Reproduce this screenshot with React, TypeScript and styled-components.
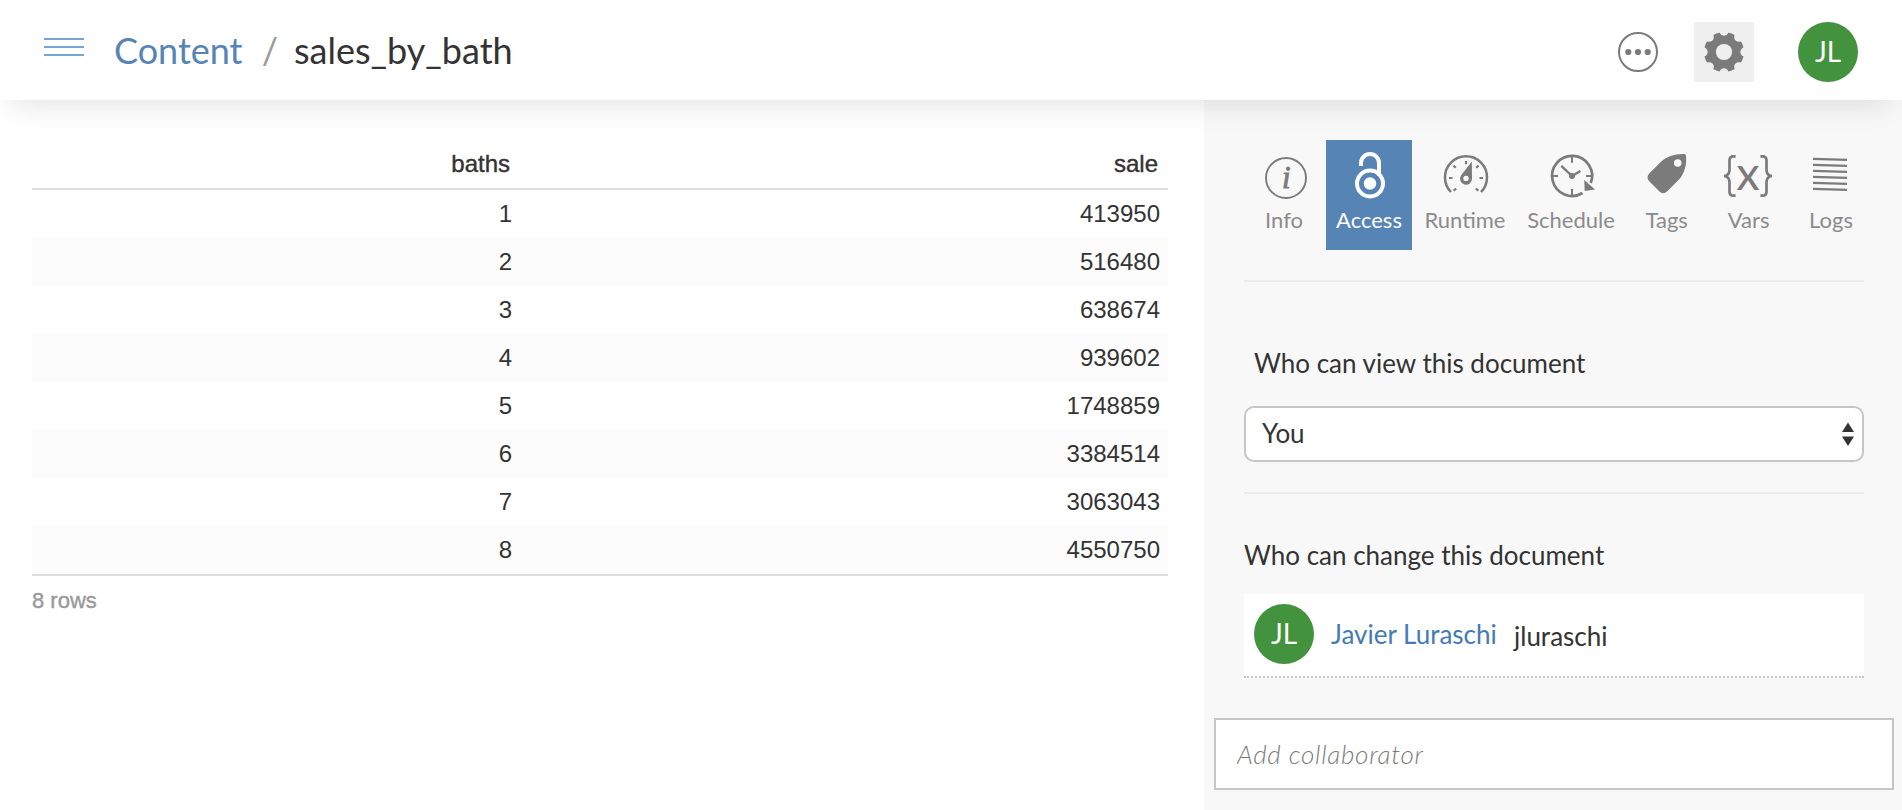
import React from "react";
import styled, { createGlobalStyle } from "styled-components";

const GlobalStyle = createGlobalStyle`
  * { box-sizing: border-box; }
  body { margin: 0; background: #fff; color: #333; font-family: Lato, sans-serif; overflow: hidden; }
`;

const Page = styled.div`
  height: 810px;
  display: flex;
  flex-direction: column;
`;

const Header = styled.header`
  position: relative;
  z-index: 1;
  flex: none;
  height: 100px;
  padding: 0 44px;
  display: flex;
  align-items: center;
  background: #fff;
  box-shadow: 0 16px 30px -12px rgba(0, 0, 0, 0.12);
`;

const MenuButton = styled.div`
  width: 40px;
  height: 18px;
  margin: 0 30px 6px 0;
  display: flex;
  flex-direction: column;
  justify-content: space-between;
`;

const MenuBar = styled.span`
  height: 2px;
  background: #78a6d8;
`;

const Breadcrumb = styled.nav`
  flex: 1;
  display: flex;
  align-items: center;
  font-size: 36px;
  line-height: 44px;
  white-space: pre;
`;

const CrumbLink = styled.span`
  width: 132px;
  color: #5684b5;
`;

const Slash = styled.span`
  width: 48px;
  text-align: center;
  color: #999;
`;

const HeaderActions = styled.div`
  display: flex;
  align-items: center;
  padding-top: 4px;
`;

const IconBox = styled.div<{ $active?: boolean }>`
  width: 60px;
  height: 60px;
  display: flex;
  align-items: center;
  justify-content: center;
  background: ${(p) => (p.$active ? "#efefef" : "transparent")};
  margin-right: ${(p) => (p.$active ? 44 : 26)}px;
`;

const Avatar = styled.div`
  flex: none;
  width: 60px;
  height: 60px;
  padding-bottom: 2px;
  border-radius: 50%;
  display: flex;
  align-items: center;
  justify-content: center;
  background: #42923e;
  color: #fff;
  font-size: 28px;
  line-height: 34px;
`;

const Body = styled.div`
  flex: 1;
  display: flex;
`;

const Content = styled.main`
  width: 1204px;
  padding: 40px 36px 0 32px;
  font-family: "Liberation Sans", Arial, sans-serif;
`;

const Table = styled.table`
  width: 1136px;
  table-layout: fixed;
  border-collapse: separate;
  border-spacing: 0;
  border-bottom: 2px solid #dcdcdc;
`;

const HeadCell = styled.th`
  height: 50px;
  padding: 0 10px 1px 0;
  border-bottom: 2px solid #dcdcdc;
  text-align: right;
  font-size: 24px;
  font-weight: 400;
  -webkit-text-stroke: 0.4px #333;
`;

const Row = styled.tr`
  &:nth-child(even) { background: #fcfcfc; }
`;

const Cell = styled.td`
  height: 48px;
  padding: 0 8px 0 0;
  text-align: right;
  font-size: 24px;
  line-height: 28px;
`;

const RowCount = styled.div`
  margin-top: 13px;
  font-size: 22px;
  line-height: 24px;
  color: #999;
  -webkit-text-stroke: 0.4px #999;
`;

const Sidebar = styled.aside`
  width: 698px;
  background: #f8f8f8;
  padding-top: 40px;
`;

const Tabs = styled.div`
  display: flex;
  margin-left: 40px;
  height: 110px;
`;

const Tab = styled.div<{ $width: number; $active?: boolean }>`
  width: ${(p) => p.$width}px;
  padding-top: 6px;
  display: flex;
  flex-direction: column;
  align-items: center;
  color: ${(p) => (p.$active ? "#fff" : "#7b7b7b")};
  background: ${(p) => (p.$active ? "#5684b5" : "transparent")};
  svg { flex: none; overflow: visible; }
`;

const TabLabel = styled.span<{ $active?: boolean; $shift?: number }>`
  margin-top: 5px;
  margin-left: ${(p) => (p.$shift || 0) * 2}px;
  font-size: 22px;
  line-height: 26px;
  color: ${(p) => (p.$active ? "#fff" : "#8b8b8b")};
`;

const Section = styled.section<{ $top: number }>`
  margin: ${(p) => p.$top}px 38px 0 40px;
  border-top: 2px solid #ebebeb;
`;

const SectionTitle = styled.h2<{ $top: number; $indent?: number }>`
  margin: ${(p) => p.$top}px 0 0 ${(p) => p.$indent || 0}px;
  font-size: 26px;
  font-weight: 400;
  line-height: 32px;
`;

const Select = styled.div`
  height: 56px;
  margin-top: 27px;
  padding: 0 8px 0 16px;
  display: flex;
  align-items: center;
  justify-content: space-between;
  background: #fff;
  border: 2px solid #c6c6c6;
  border-radius: 10px;
  font-size: 26px;
`;

const SelectValue = styled.span`
  padding-bottom: 2px;
`;

const Person = styled.div`
  height: 84px;
  margin-top: 23px;
  padding: 10px 10px 0;
  display: flex;
  background: #fff;
  border-bottom: 2px dotted #c6c6c6;
  font-size: 26px;
  line-height: 32px;
`;

const PersonName = styled.span`
  width: 182px;
  margin: 14px 0 0 17px;
  color: #447ab6;
`;

const PersonLogin = styled.span`
  margin: 16px 0 0 1px;
`;

const CollaboratorInput = styled.input`
  display: block;
  width: 680px;
  height: 72px;
  margin: 40px 0 0 10px;
  padding: 0 21px 0;
  border: 2px solid #c6c6c6;
  border-radius: 0;
  background: #fff;
  font: italic 300 26px Lato, sans-serif;
  letter-spacing: 0.7px;
  &::placeholder { color: #7c7c7c; opacity: 1; }
`;

const MoreIcon = () => (
  <svg width="40" height="40" viewBox="0 0 40 40" fill="#7b7b7b">
    <circle cx="20" cy="20" r="19" fill="none" stroke="#7b7b7b" strokeWidth="2" />
    {[10.3, 20, 29.7].map((x) => <circle key={x} cx={x} cy="20" r="3.1" />)}
  </svg>
);

const GearIcon = () => (
  <svg width="44" height="44" viewBox="-22 -22 44 44">
    <circle r="20" fill="#7b7b7b" />
    {[0, 45, 90, 135, 180, 225, 270, 315].map((a) => (
      <circle key={a} cx="21" r="4.7" fill="#efefef" transform={`rotate(${a})`} />
    ))}
    <circle r="8.1" fill="#efefef" />
  </svg>
);

const TabIcon = ({ children }: { children: React.ReactNode }) => (
  <svg width="48" height="56" viewBox="0 0 48 56" fill="none" stroke="currentColor">{children}</svg>
);

const InfoIcon = () => (
  <TabIcon>
    <circle cx="25" cy="32" r="20" strokeWidth="1.9" />
    <text x="25.4" y="42" textAnchor="middle" fontFamily="Liberation Serif, serif" fontStyle="italic" fontSize="31" fill="currentColor" strokeWidth="0.9">i</text>
  </TabIcon>
);

const AccessIcon = () => (
  <TabIcon>
    <circle cx="25" cy="37.5" r="13" strokeWidth="4" />
    <circle cx="25" cy="37.5" r="6.2" fill="currentColor" stroke="none" />
    <path d="M16 20V17a9 9 0 0 1 18 0V30" strokeWidth="4" />
  </TabIcon>
);

const RuntimeIcon = () => (
  <TabIcon>
    <path d="M10 46A21 21 0 1 1 40 46" strokeWidth="2.5" />
    <path d="M8 32h3.5M38.5 32h3.5M25 15v3.2M12.4 19.6l2.4 2.2M37.6 19.6l-2.4 2.2M12.6 44.6l2.6-2M37.4 44.6l-2.6-2" strokeWidth="2.2" />
    <path fillRule="evenodd" fill="currentColor" stroke="none" d="M30.8 15.5L31 32.5A6 6 0 1 1 20 29.4ZM25 29.7a2.7 2.7 0 1 0 0 5.4a2.7 2.7 0 1 0 0-5.4Z" />
  </TabIcon>
);

const ScheduleIcon = () => (
  <TabIcon>
    <path d="M35.5 47A20 20 0 1 1 43.8 37" strokeWidth="2.7" />
    <path d="M25 11v5.8M25 43v6M5 30h6M39 30h6" strokeWidth="2" />
    <path d="M14.3 19.8L25 30L33.4 25" strokeWidth="2.3" />
    <circle cx="25" cy="30" r="3" fill="currentColor" stroke="none" />
    <path d="M37.3 34L48 43.4L37.7 45Z" fill="currentColor" stroke="none" />
  </TabIcon>
);

const TagIcon = () => (
  <TabIcon>
    <path fillRule="evenodd" fill="currentColor" stroke="none" d="M42.3 8C34 7.4 25 10 18.5 16.2L7 27.8Q4 31.5 7 35L17.5 45.5Q21 49 25 45.5L37 33.5C42.5 28 45 18 44 9.8Q43.8 8.2 42.3 8ZM35.7 13.2a3.8 3.8 0 1 0 0 7.6a3.8 3.8 0 1 0 0-7.6Z" />
  </TabIcon>
);

const VarsIcon = () => (
  <TabIcon>
    <path d="M11.6 10.3H9.5Q5.5 10.3 5.5 14.5V23.5Q5.5 29.7 0 30Q5.5 30.3 5.5 36.5V45.5Q5.5 49.7 9.5 49.7H11.6M36.4 10.3H38.5Q42.5 10.3 42.5 14.5V23.5Q42.5 29.7 48 30Q42.5 30.3 42.5 36.5V45.5Q42.5 49.7 38.5 49.7H36.4" strokeWidth="2.7" />
    <text x="24" y="44" textAnchor="middle" fontFamily="Lato, sans-serif" fontSize="47" fill="currentColor" stroke="none">x</text>
  </TabIcon>
);

const LogsIcon = () => (
  <TabIcon>
    {[12.8, 18.8, 24.8, 30.8, 36.8, 42.8].map((y) => (
      <path key={y} d={`M7 ${y}L41 ${y + 1}`} strokeWidth="2.3" />
    ))}
  </TabIcon>
);

const SelectArrows = () => (
  <svg width="12" height="24" viewBox="0 0 12 24" fill="#333">
    <path d="M6 0.5L12 10H0ZM0 14.5H12L6 24Z" />
  </svg>
);

const tabs = [
  { label: "Info", width: 82, Icon: InfoIcon, shift: -1 },
  { label: "Access", width: 86, Icon: AccessIcon, active: true },
  { label: "Runtime", width: 106, Icon: RuntimeIcon },
  { label: "Schedule", width: 106, Icon: ScheduleIcon },
  { label: "Tags", width: 84, Icon: TagIcon, shift: 0.7 },
  { label: "Vars", width: 80, Icon: VarsIcon, shift: 0.7 },
  { label: "Logs", width: 84, Icon: LogsIcon, shift: 1 },
];

const rows = [
  [1, 413950], [2, 516480], [3, 638674], [4, 939602],
  [5, 1748859], [6, 3384514], [7, 3063043], [8, 4550750],
];

export default function App() {
  return (
    <Page>
      <GlobalStyle />
      <Header>
        <MenuButton><MenuBar /><MenuBar /><MenuBar /></MenuButton>
        <Breadcrumb>
          <CrumbLink>Content</CrumbLink>
          <Slash>/</Slash>
          <span>sales_by_bath</span>
        </Breadcrumb>
        <HeaderActions>
          <IconBox><MoreIcon /></IconBox>
          <IconBox $active><GearIcon /></IconBox>
          <Avatar>JL</Avatar>
        </HeaderActions>
      </Header>
      <Body>
        <Content>
          <Table>
            <colgroup><col width="488" /><col /></colgroup>
            <thead><tr><HeadCell>baths</HeadCell><HeadCell>sale</HeadCell></tr></thead>
            <tbody>
              {rows.map(([baths, sale]) => (
                <Row key={baths}><Cell>{baths}</Cell><Cell>{sale}</Cell></Row>
              ))}
            </tbody>
          </Table>
          <RowCount>8 rows</RowCount>
        </Content>
        <Sidebar>
          <Tabs>
            {tabs.map(({ label, width, Icon, active, shift }) => (
              <Tab key={label} $width={width} $active={active}>
                <Icon />
                <TabLabel $active={active} $shift={shift}>{label}</TabLabel>
              </Tab>
            ))}
          </Tabs>
          <Section $top={30}>
            <SectionTitle $top={65} $indent={10}>Who can view this document</SectionTitle>
            <Select><SelectValue>You</SelectValue><SelectArrows /></Select>
          </Section>
          <Section $top={30}>
            <SectionTitle $top={45}>Who can change this document</SectionTitle>
            <Person>
              <Avatar>JL</Avatar>
              <PersonName>Javier Luraschi</PersonName>
              <PersonLogin>jluraschi</PersonLogin>
            </Person>
          </Section>
          <CollaboratorInput placeholder="Add collaborator" />
        </Sidebar>
      </Body>
    </Page>
  );
}
